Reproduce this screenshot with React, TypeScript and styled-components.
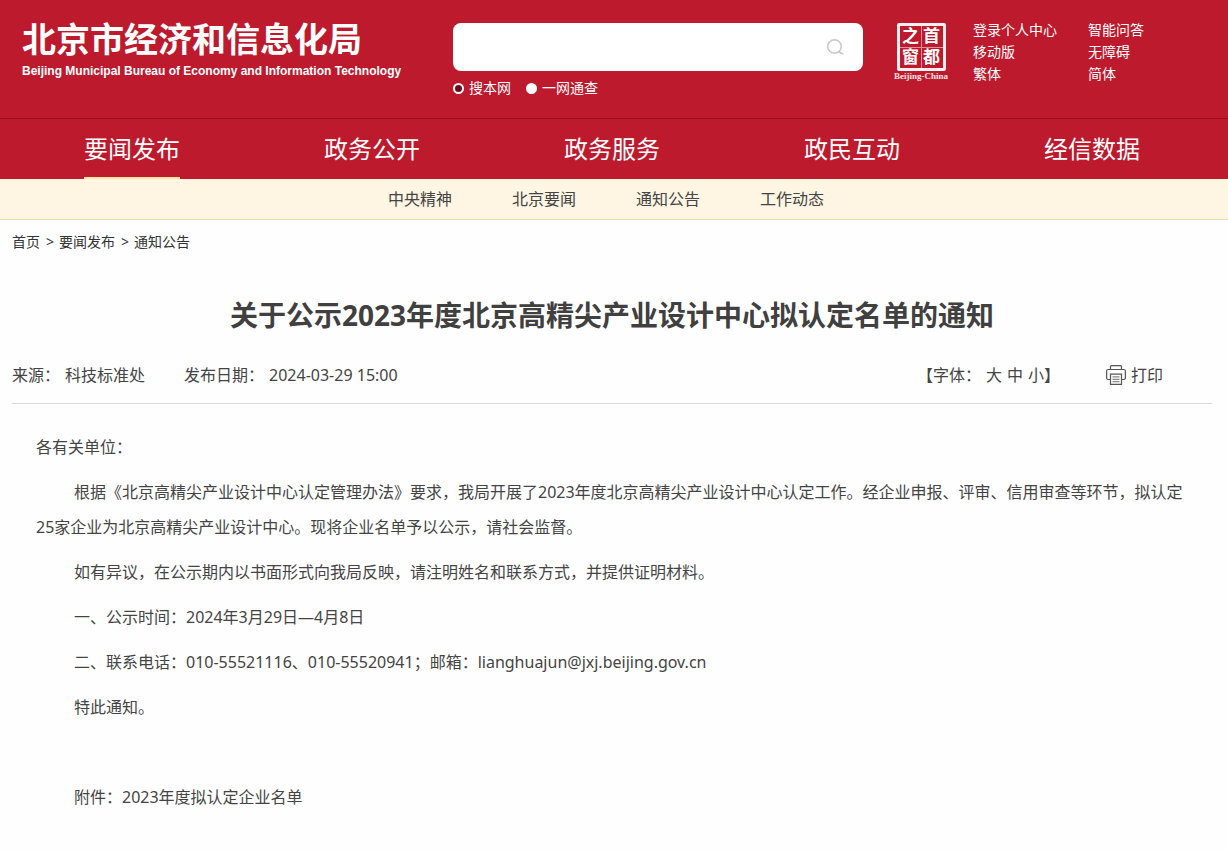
import React from "react";
import styled, { createGlobalStyle } from "styled-components";

const RED = "#bd1a2d";
const SANS = '"Noto Sans", "Noto Sans CJK SC", sans-serif';

const GlobalStyle = createGlobalStyle`
  *, *::before, *::after { box-sizing: border-box; }
  body { margin: 0; background: #fefefe; color: #444; font: 16px/24px ${SANS}; }
  a { color: inherit; text-decoration: none; }
  h1, h2, p, ul, ol, dl, dd { margin: 0; padding: 0; }
  ul, ol { list-style: none; }
  button, input { font: inherit; color: inherit; }
`;

const Header = styled.header`
  background: ${RED};
  color: #fff;
`;

const Masthead = styled.div`
  display: grid;
  grid-template-columns: minmax(0, 441fr) minmax(0, 410fr) minmax(0, 349fr);
  align-items: start;
  height: 118px;
  padding: 0 16px 0 12px;
`;

const Brand = styled.a`
  display: block;
  padding: 18px 0 0 10px;
  white-space: nowrap;
`;

const BrandName = styled.span`
  display: block;
  font-family: "Noto Sans CJK SC", sans-serif;
  font-weight: 700;
  font-size: 34px;
  line-height: 40px;
`;

const BrandLatin = styled.span`
  display: block;
  font: bold 12px/26px "Liberation Sans", sans-serif;
`;

const SearchForm = styled.form`
  padding-top: 23px;
`;

const SearchBox = styled.div`
  display: flex;
  align-items: center;
  height: 48px;
  background: #fff;
  border-radius: 8px;
  color: #333;
`;

const SearchInput = styled.input`
  flex: 1;
  min-width: 0;
  height: 100%;
  padding: 0 16px;
  border: 0;
  outline: 0;
  background: transparent;
`;

const SearchButton = styled.button`
  display: flex;
  margin-right: 18px;
  padding: 0;
  border: 0;
  background: none;
  color: #c8c8c8;
  cursor: pointer;
`;

const Scopes = styled.div`
  display: flex;
  gap: 15px;
  padding-top: 6px;
`;

const Scope = styled.label`
  display: flex;
  align-items: center;
  gap: 5px;
  font-size: 14px;
  line-height: 22px;
`;

const Radio = styled.input`
  appearance: none;
  width: 11px;
  height: 11px;
  margin: 0;
  border: 2px solid #fff;
  border-radius: 50%;
  background: #fff;
  &:checked { background: #6d0a18; }
`;

const Side = styled.div`
  display: flex;
  align-items: flex-start;
  padding: 19px 0 0 31px;
`;

const Seal = styled.a`
  display: flex;
  flex-direction: column;
  align-items: center;
  width: 54px;
  margin: 4px 25px 0 0;
`;

const SealFrame = styled.span`
  display: grid;
  grid-template-columns: 1fr 1fr;
  gap: 1px;
  width: 49px;
  height: 48px;
  padding: 1px;
  border: 3px solid #fdf0f0;
  border-radius: 2px;
  background: linear-gradient(#e58f98, #e58f98) center / 1px 100% no-repeat,
    linear-gradient(#e58f98, #e58f98) center / 100% 1px no-repeat;
`;

const SealGlyph = styled.span`
  font: bold 17px/19px "Liberation Sans", "Noto Sans CJK SC", sans-serif;
  text-align: center;
`;

const SealCaption = styled.span`
  font: bold 9px/10px "Liberation Serif", serif;
  white-space: nowrap;
  color: #fbe3e5;
`;

const QuickLinks = styled.ul`
  display: grid;
  grid-template-columns: 115px auto;
  font-size: 14px;
  line-height: 22px;
  white-space: nowrap;
`;

const MainNav = styled.nav`
  height: 61px;
  padding: 0 16px 0 12px;
  border-top: 1px solid #a30b1c;
`;

const MainList = styled.ul`
  display: grid;
  grid-template-columns: repeat(5, 1fr);
  justify-items: center;
`;

const MainLink = styled.a<{ $active?: boolean }>`
  display: block;
  height: 60px;
  font-size: 24px;
  line-height: 60px;
  border-bottom: 2px solid ${(p) => (p.$active ? "#fbe0a8" : "transparent")};
`;

const SubNav = styled.nav`
  height: 41px;
  padding-right: 16px;
  background: #fef5e3;
  border-bottom: 1px solid #e6dca8;
`;

const SubList = styled.ul`
  display: flex;
  justify-content: center;
  gap: 60px;
  line-height: 40px;
`;

const Page = styled.main`
  padding: 0 16px 32px 12px;
`;

const Breadcrumb = styled.ol`
  display: flex;
  gap: 5px;
  padding-top: 11px;
  font-size: 14px;
  line-height: 22px;
  color: #333;
`;

const Crumb = styled.li`
  &:not(:last-child)::after { content: ">"; margin-left: 6px; }
`;

const Title = styled.h1`
  margin-top: 38px;
  font-size: 28px;
  line-height: 48px;
  text-align: center;
  color: #404040;
`;

const Meta = styled.div`
  display: flex;
  align-items: center;
  height: 65px;
  padding: 8px 49px 0 0;
  border-bottom: 1px solid #d8dadb;
`;

const Facts = styled.dl`
  display: flex;
  flex: 1;
  gap: 39px;
`;

const Fact = styled.div`
  display: flex;
  gap: 5px;
`;

const FontSizes = styled.div`
  display: flex;
  margin-right: 46px;
`;

const SizeButton = styled.button`
  margin-left: 5px;
  padding: 0;
  border: 0;
  background: none;
  cursor: pointer;
`;

const PrintButton = styled(SizeButton)`
  display: flex;
  align-items: center;
  gap: 5px;
  margin: 0;
`;

const Article = styled.article`
  padding: 26px 24px 0;
  line-height: 35px;
`;

const Para = styled.p<{ $flush?: boolean }>`
  min-height: 35px;
  margin-bottom: 10px;
  text-indent: ${(p) => (p.$flush ? "0" : "38px")};
`;

const quickLinks = ["登录个人中心", "智能问答", "移动版", "无障碍", "繁体", "简体"];
const mainLinks = ["要闻发布", "政务公开", "政务服务", "政民互动", "经信数据"];
const subLinks = ["中央精神", "北京要闻", "通知公告", "工作动态"];
const crumbs = ["首页", "要闻发布", "通知公告"];

const SearchIcon = () => (
  <svg width="19" height="18" viewBox="0 0 19 18" fill="none" stroke="currentColor" strokeWidth="1.6" aria-hidden="true">
    <circle cx="8.5" cy="8.5" r="6.8" />
    <path d="M13 13.6q1.6 1.6 3.8 2.2" strokeLinecap="round" />
  </svg>
);

const PrintIcon = () => (
  <svg width="20" height="20" viewBox="0 0 20 20" fill="none" stroke="#555" strokeWidth="1.2" aria-hidden="true">
    <path d="M4.5 4.5V1.6Q4.5.6 5.5.6h9q1 0 1 1v2.9" />
    <path d="M4.5 14.5H2.1Q.6 14.5.6 13V6q0-1.5 1.5-1.5h15.8q1.5 0 1.5 1.5v7q0 1.5-1.5 1.5h-2.4" />
    <path d="M4.5 9.2h11v10.2h-11z" />
    <path d="M6.5 11.9h7M6.5 14.3h7M6.5 16.7h7" stroke="#888" />
  </svg>
);

export default function App() {
  return (
    <>
      <GlobalStyle />
      <Header>
        <Masthead>
          <Brand href="#">
            <BrandName>北京市经济和信息化局</BrandName>
            <BrandLatin>Beijing Municipal Bureau of Economy and Information Technology</BrandLatin>
          </Brand>
          <SearchForm onSubmit={(e) => e.preventDefault()}>
            <SearchBox>
              <SearchInput type="text" aria-label="搜索" />
              <SearchButton type="submit" aria-label="搜索">
                <SearchIcon />
              </SearchButton>
            </SearchBox>
            <Scopes>
              <Scope>
                <Radio type="radio" name="scope" defaultChecked />
                搜本网
              </Scope>
              <Scope>
                <Radio type="radio" name="scope" />
                一网通查
              </Scope>
            </Scopes>
          </SearchForm>
          <Side>
            <Seal href="#">
              <SealFrame>
                {["之", "首", "窗", "都"].map((c) => (
                  <SealGlyph key={c}>{c}</SealGlyph>
                ))}
              </SealFrame>
              <SealCaption>Beijing-China</SealCaption>
            </Seal>
            <QuickLinks>
              {quickLinks.map((t) => (
                <li key={t}>
                  <a href="#">{t}</a>
                </li>
              ))}
            </QuickLinks>
          </Side>
        </Masthead>
        <MainNav>
          <MainList>
            {mainLinks.map((t, i) => (
              <li key={t}>
                <MainLink href="#" $active={i === 0}>
                  {t}
                </MainLink>
              </li>
            ))}
          </MainList>
        </MainNav>
      </Header>
      <SubNav>
        <SubList>
          {subLinks.map((t) => (
            <li key={t}>
              <a href="#">{t}</a>
            </li>
          ))}
        </SubList>
      </SubNav>
      <Page>
        <Breadcrumb>
          {crumbs.map((t) => (
            <Crumb key={t}>
              <a href="#">{t}</a>
            </Crumb>
          ))}
        </Breadcrumb>
        <Title>关于公示2023年度北京高精尖产业设计中心拟认定名单的通知</Title>
        <Meta>
          <Facts>
            <Fact>
              <dt>来源：</dt>
              <dd>科技标准处</dd>
            </Fact>
            <Fact>
              <dt>发布日期：</dt>
              <dd>2024-03-29 15:00</dd>
            </Fact>
          </Facts>
          <FontSizes>
            <span>【字体：</span>
            <SizeButton type="button">大</SizeButton>
            <SizeButton type="button">中</SizeButton>
            <SizeButton type="button">小</SizeButton>
            <span>】</span>
          </FontSizes>
          <PrintButton type="button">
            <PrintIcon />
            打印
          </PrintButton>
        </Meta>
        <Article>
          <Para $flush>各有关单位：</Para>
          <Para>
            根据《北京高精尖产业设计中心认定管理办法》要求，我局开展了2023年度北京高精尖产业设计中心认定工作。经企业申报、评审、信用审查等环节，拟认定25家企业为北京高精尖产业设计中心。现将企业名单予以公示，请社会监督。
          </Para>
          <Para>如有异议，在公示期内以书面形式向我局反映，请注明姓名和联系方式，并提供证明材料。</Para>
          <Para>一、公示时间：2024年3月29日—4月8日</Para>
          <Para>二、联系电话：010-55521116、010-55520941；邮箱：lianghuajun@jxj.beijing.gov.cn</Para>
          <Para>特此通知。</Para>
          <Para />
          <Para>
            附件：<a href="#">2023年度拟认定企业名单</a>
          </Para>
        </Article>
      </Page>
    </>
  );
}
